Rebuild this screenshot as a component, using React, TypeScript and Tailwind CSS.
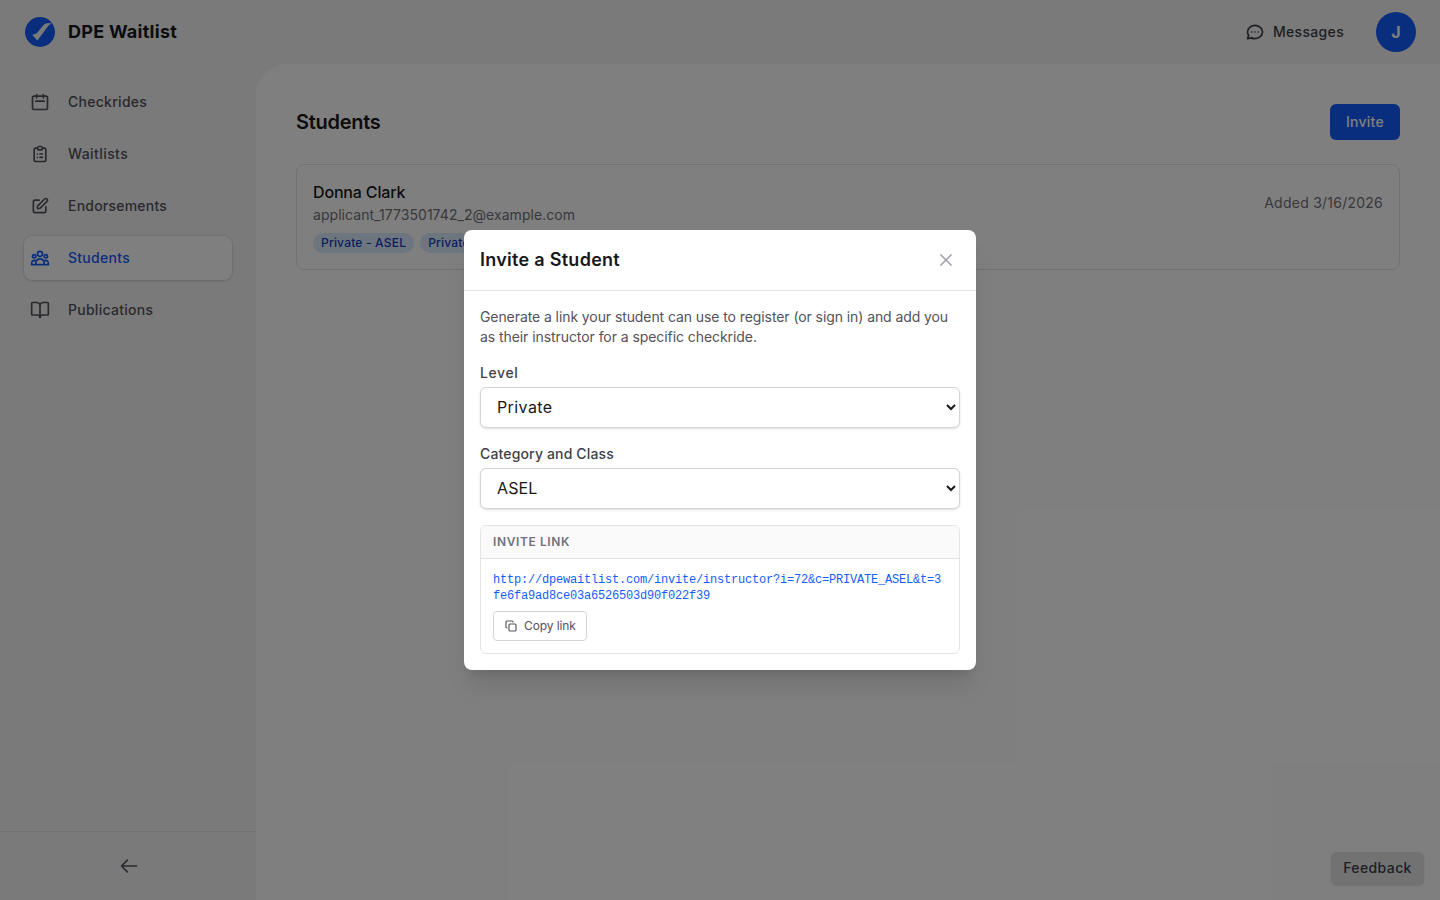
import type { ReactNode } from "react";
import { BookOpen, Copy } from "lucide-react";
import {
  HiOutlineArrowLeft,
  HiOutlineCalendar,
  HiOutlineChat,
  HiOutlineClipboardList,
  HiOutlinePencilAlt,
  HiOutlineUserGroup,
  HiOutlineX,
} from "react-icons/hi";

const navItems = [
  { label: "Checkrides", Icon: HiOutlineCalendar, tracking: "tracking-[0.28px]" },
  { label: "Waitlists", Icon: HiOutlineClipboardList, tracking: "tracking-[0.42px]" },
  { label: "Endorsements", Icon: HiOutlinePencilAlt, tracking: "tracking-[0.22px]" },
  { label: "Students", Icon: HiOutlineUserGroup, tracking: "tracking-[0.28px]", active: true },
  { label: "Publications", Icon: BookOpen, tracking: "tracking-[0.27px]" },
];

function Logo() {
  return (
    <svg viewBox="0 0 32 32" className="size-8">
      <circle cx="16" cy="16" r="15" fill="#155dfc" />
      <path d="M8.2 18.9 12.9 17.3 19 9.6Q20.8 7.4 23 7.3L27.6 7.1 25.4 8.8Q24.4 9.6 23.6 10.8L13.4 24.4Z" fill="#f4f4f5" />
    </svg>
  );
}

function Header() {
  return (
    <header className="flex h-16 shrink-0 items-center justify-between px-6">
      <div className="flex items-center gap-3">
        <Logo />
        <span className="text-lg font-bold tracking-[0.27px] text-zinc-900">DPE Waitlist</span>
      </div>
      <div className="flex items-center gap-8">
        <button className="flex items-center gap-2 text-sm font-medium tracking-[0.33px] text-zinc-700">
          <HiOutlineChat size={20} />
          Messages
        </button>
        <div className="flex size-10 items-center justify-center rounded-full bg-blue-600 text-base font-bold text-white">J</div>
      </div>
    </header>
  );
}

function Sidebar() {
  return (
    <aside className="flex w-64 shrink-0 flex-col">
      <nav className="flex grow flex-col gap-2 px-6 pt-4">
        {navItems.map(({ label, Icon, tracking, active }) => (
          <a
            key={label}
            className={`flex h-11 w-52 items-center gap-[18px] rounded-lg pl-1.5 text-sm font-medium ${tracking} ${
              active ? "bg-white text-blue-600 shadow-[0_0_0_1px_rgba(0,0,0,0.05),0_1px_3px_rgba(0,0,0,0.1)]" : "text-zinc-600"
            }`}
          >
            <Icon size={20} />
            {label}
          </a>
        ))}
      </nav>
      <div className="flex h-[69px] items-center justify-center border-t border-zinc-200 pl-px text-zinc-600">
        <HiOutlineArrowLeft size={20} />
      </div>
    </aside>
  );
}

function Badge({ children }: { children: ReactNode }) {
  return (
    <span className="rounded-full bg-blue-100 px-2 py-0.5 text-xs font-medium tracking-[0.2px] text-blue-800">
      {children}
    </span>
  );
}

function StudentsPage() {
  return (
    <main className="grow rounded-tl-[32px] bg-white p-10">
      <div className="flex h-9 items-center justify-between">
        <h1 className="text-xl font-semibold tracking-[-0.27px] text-zinc-900">Students</h1>
        <button className="h-9 w-[70px] rounded-md bg-blue-600 text-sm font-medium tracking-[0.24px] text-white">Invite</button>
      </div>
      <div className="mt-6 flex items-start justify-between rounded-lg border border-zinc-200 p-4">
        <div>
          <div className="h-6 text-base leading-[22px] font-medium tracking-[-0.16px] text-zinc-900">Donna Clark</div>
          <div className="text-sm tracking-[0.05px] text-zinc-500">applicant_1773501742_2@example.com</div>
          <div className="mt-2 flex gap-1.5">
            <Badge>Private - ASEL</Badge>
            <Badge>Private - AMEL</Badge>
          </div>
        </div>
        <div className="mt-3 text-sm tracking-[0.24px] text-zinc-500">Added 3/16/2026</div>
      </div>
    </main>
  );
}

function SelectField({ label, value, labelTracking, valueTracking }: {
  label: string;
  value: string;
  labelTracking: string;
  valueTracking: string;
}) {
  return (
    <label className="mt-4 block">
      <span className={`block text-sm font-medium text-zinc-700 ${labelTracking}`}>{label}</span>
      <select
        defaultValue={value}
        className={`mt-1 block h-[41px] w-full rounded-md border border-zinc-300 bg-white px-3 pb-0.5 text-base text-zinc-900 shadow-sm ${valueTracking}`}
      >
        <option>{value}</option>
      </select>
    </label>
  );
}

function InviteDialog() {
  return (
    <div role="dialog" className="h-[440px] w-[512px] rounded-lg bg-white shadow-xl">
      <div className="flex h-[61px] items-center justify-between border-b border-zinc-200 px-4">
        <h2 className="text-lg font-semibold tracking-[0.28px] text-zinc-900">Invite a Student</h2>
        <button className="p-1 text-zinc-400">
          <HiOutlineX size={20} />
        </button>
      </div>
      <div className="p-4">
        <p className="text-sm text-zinc-600">
          <span className="block whitespace-nowrap tracking-[-0.085px]">
            Generate a link your student can use to register (or sign in) and add you
          </span>
          <span className="block tracking-[-0.07px]">as their instructor for a specific checkride.</span>
        </p>
        <SelectField label="Level" value="Private" labelTracking="tracking-[0.6px]" valueTracking="tracking-[0.4px]" />
        <SelectField label="Category and Class" value="ASEL" labelTracking="tracking-[0.15px]" valueTracking="tracking-[0.15px]" />
        <div className="mt-4 overflow-hidden rounded-md border border-zinc-200">
          <div className="border-b border-zinc-200 bg-zinc-50 px-3 py-2 text-xs font-semibold tracking-[0.6px] text-zinc-500">
            INVITE LINK
          </div>
          <div className="p-3">
            <p className="pt-px font-['Liberation_Mono',monospace] text-xs tracking-[-0.2px] break-all text-blue-600">
              http://dpewaitlist.com/invite/instructor?i=72&amp;c=PRIVATE_ASEL&amp;t=3fe6fa9ad8ce03a6526503d90f022f39
            </p>
            <button className="mt-[7px] flex h-[30px] w-[94px] items-center gap-[7px] rounded border border-zinc-300 px-[11px] text-xs tracking-[-0.1px] whitespace-nowrap text-zinc-600">
              <Copy size={12} strokeWidth={2.3} className="shrink-0" />
              Copy link
            </button>
          </div>
        </div>
      </div>
    </div>
  );
}

export default function App() {
  return (
    <div className="relative flex h-[900px] w-[1440px] flex-col overflow-hidden bg-zinc-100 font-['Inter',sans-serif]">
      <Header />
      <div className="flex min-h-0 grow">
        <Sidebar />
        <StudentsPage />
      </div>
      <button className="absolute right-4 bottom-[15px] h-[33px] w-[93px] rounded-md bg-zinc-200 pb-0.5 text-sm font-medium tracking-[0.4px] text-zinc-700 shadow-sm">
        Feedback
      </button>
      <div className="absolute inset-0 flex items-center justify-center bg-black/50">
        <InviteDialog />
      </div>
    </div>
  );
}
